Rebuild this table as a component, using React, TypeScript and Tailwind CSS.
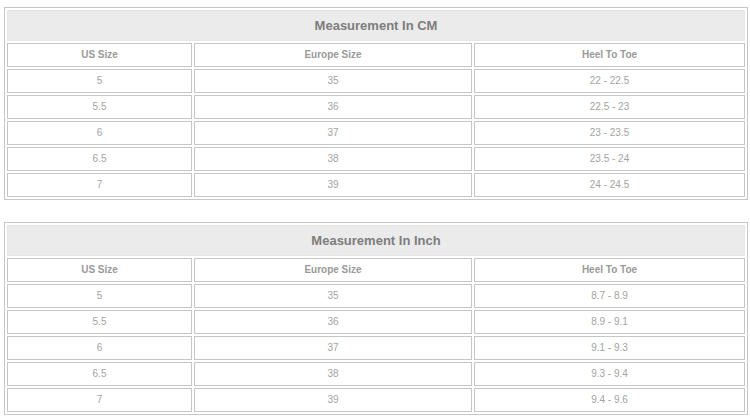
import React from 'react';

type Row = [string, string, string];

const cmRows: Row[] = [
  ['5', '35', '22 - 22.5'],
  ['5.5', '36', '22.5 - 23'],
  ['6', '37', '23 - 23.5'],
  ['6.5', '38', '23.5 - 24'],
  ['7', '39', '24 - 24.5'],
];

const inchRows: Row[] = [
  ['5', '35', '8.7 - 8.9'],
  ['5.5', '36', '8.9 - 9.1'],
  ['6', '37', '9.1 - 9.3'],
  ['6.5', '38', '9.3 - 9.4'],
  ['7', '39', '9.4 - 9.6'],
];

function SizeTable({ title, rows }: { title: string; rows: Row[] }) {
  const cell = 'h-[24px] border border-[#c6c6c6] text-center align-middle p-0 leading-none';
  return (
    <table className="w-[744px] table-fixed border-separate border-spacing-[2px] border border-[#c6c6c6] bg-white">
      <colgroup>
        <col className="w-[185px]" />
        <col className="w-[278px]" />
        <col className="w-[271px]" />
      </colgroup>
      <tbody>
        <tr>
          <td
            colSpan={3}
            className="h-[31px] border border-[#e6e6e6] bg-[#ebebeb] text-center align-middle text-[13px] font-bold text-[#7d7d7d]"
          >
            {title}
          </td>
        </tr>
        <tr>
          {['US Size', 'Europe Size', 'Heel To Toe'].map((h) => (
            <td key={h} className={`${cell} text-[10px] font-bold text-[#999999]`}>
              {h}
            </td>
          ))}
        </tr>
        {rows.map((row, idx) => (
          <tr key={idx}>
            {row.map((v, i) => (
              <td key={i} className={`${cell} text-[10px] text-[#a3a3a3]`}>
                {v}
              </td>
            ))}
          </tr>
        ))}
      </tbody>
    </table>
  );
}

export default function App() {
  return (
    <div className="w-[750px] h-[418px] bg-white pt-[7px] pl-[4px] font-['Liberation_Sans',Arial,sans-serif]">
      <div className="flex flex-col gap-[22px]">
        <SizeTable title="Measurement In CM" rows={cmRows} />
        <SizeTable title="Measurement In Inch" rows={inchRows} />
      </div>
    </div>
  );
}
